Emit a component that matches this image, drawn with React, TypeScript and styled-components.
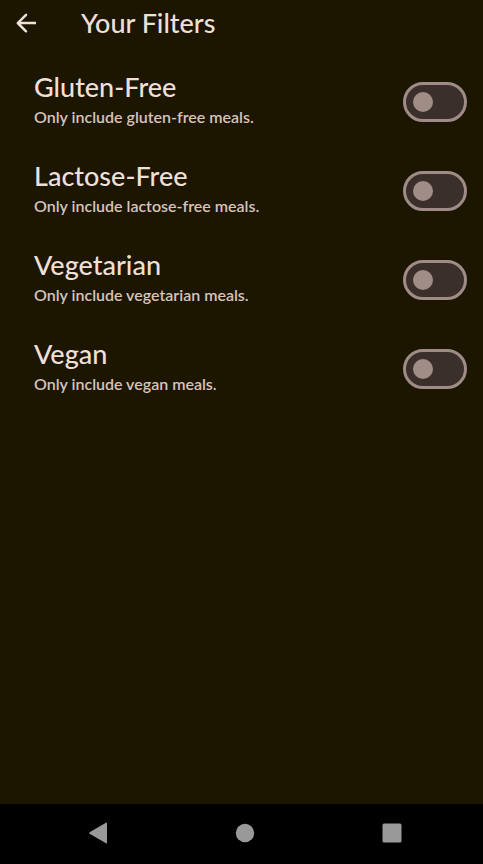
import React, { useState } from "react";
import styled, { createGlobalStyle } from "styled-components";

const GlobalStyle = createGlobalStyle`
  * { box-sizing: border-box; }
  body {
    margin: 0;
    background: #1c1600;
    color: #efdfd9;
    font-family: Lato, sans-serif;
  }
  button { border: 0; padding: 0; background: none; color: inherit; cursor: pointer; }
`;

const Screen = styled.div`
  display: flex;
  flex-direction: column;
  min-height: 100vh;
`;

const AppBar = styled.header`
  display: flex;
  align-items: center;
  gap: 40px;
  height: 46px;
  padding-left: 11px;
`;

const BackButton = styled.button`
  display: flex;
  svg { display: block; }
`;

const Title = styled.h1`
  margin: 0;
  font-size: 27px;
  font-weight: 500;
  line-height: 36px;
`;

const FilterList = styled.main`
  flex: 1;
  padding: 11px 16px 0 34px;
`;

const FilterRow = styled.label`
  display: flex;
  align-items: center;
  justify-content: space-between;
  height: 89px;
  cursor: pointer;
`;

const FilterText = styled.span`
  display: flex;
  flex-direction: column;
  padding-bottom: 8px;
`;

const FilterName = styled.span`
  font-size: 27px;
  font-weight: 500;
  line-height: 38px;
`;

const FilterHint = styled.span`
  color: #d8c2bc;
  font-size: 16px;
  font-weight: 600;
  line-height: 22px;
`;

const Switch = styled.input`
  appearance: none;
  display: flex;
  align-items: center;
  flex: none;
  width: 64px;
  height: 40px;
  margin: 0;
  padding: 0 7px;
  border: 3px solid #9f8c86;
  border-radius: 20px;
  background: #3b2f2c;
  cursor: pointer;

  &::before {
    content: "";
    width: 20px;
    height: 20px;
    border-radius: 50%;
    background: #a08d85;
  }

  &:checked { justify-content: flex-end; }
`;

const NavBar = styled.nav`
  display: grid;
  grid-template-columns: repeat(3, 1fr);
  align-items: center;
  height: 60px;
  padding: 0 18px 2px 24px;
  background: #000;
  color: #999;
`;

const NavButton = styled.button`
  display: flex;
  justify-content: center;
`;

const filters = [
  { name: "Gluten-Free", hint: "Only include gluten-free meals." },
  { name: "Lactose-Free", hint: "Only include lactose-free meals." },
  { name: "Vegetarian", hint: "Only include vegetarian meals." },
  { name: "Vegan", hint: "Only include vegan meals." },
];

function Filter({ name, hint }: { name: string; hint: string }) {
  const [on, setOn] = useState(false);
  return (
    <FilterRow>
      <FilterText>
        <FilterName>{name}</FilterName>
        <FilterHint>{hint}</FilterHint>
      </FilterText>
      <Switch type="checkbox" role="switch" checked={on} onChange={() => setOn(!on)} />
    </FilterRow>
  );
}

export default function App() {
  return (
    <Screen>
      <GlobalStyle />
      <AppBar>
        <BackButton aria-label="Back">
          <svg width="30" height="30" viewBox="0 0 24 24" fill="currentColor">
            <path d="M20 11H7.83l4.900-4.900q.7-.7 0-1.400t-1.400 0L4.700 11.300q-.7.7 0 1.400l6.630 6.600q.7.7 1.400 0t0-1.400L7.830 13H20z" />
          </svg>
        </BackButton>
        <Title>Your Filters</Title>
      </AppBar>
      <FilterList>
        {filters.map((f) => (
          <Filter key={f.name} name={f.name} hint={f.hint} />
        ))}
      </FilterList>
      <NavBar>
        <NavButton aria-label="Navigate back">
          <svg width="20" height="22" viewBox="0 0 20 22" fill="currentColor">
            <path d="M18 .7q1-.5 1 .5v19.6q0 1-1 .5L1.600 11.700q-1-.7 0-1.400z" />
          </svg>
        </NavButton>
        <NavButton aria-label="Home">
          <svg width="20" height="20" viewBox="0 0 20 20" fill="currentColor">
            <circle cx="10" cy="10" r="9.200" />
          </svg>
        </NavButton>
        <NavButton aria-label="Recent apps">
          <svg width="20" height="20" viewBox="0 0 20 20" fill="currentColor">
            <rect x=".5" y=".5" width="19" height="19" rx="1.500" />
          </svg>
        </NavButton>
      </NavBar>
    </Screen>
  );
}
